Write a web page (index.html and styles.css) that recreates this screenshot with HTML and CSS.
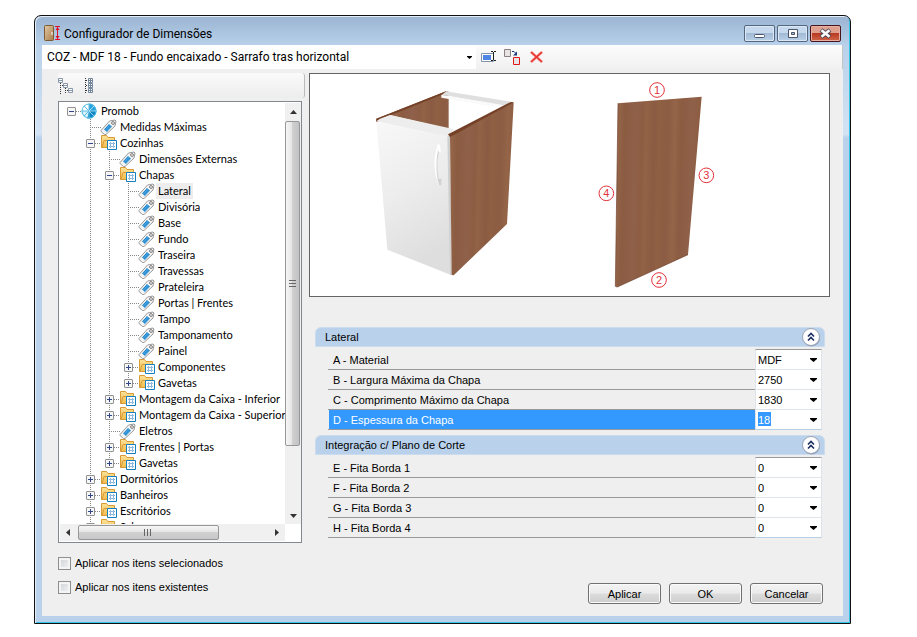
FILE: index.html
```
<!DOCTYPE html>
<html lang="pt-BR">
<head>
  <meta charset="UTF-8">
  <meta name="viewport" content="width=device-width, initial-scale=1">
  <title>Configurador de Dimensões</title>
  <link rel="stylesheet" href="styles.css">
</head>
<body>

  <!-- Shared icons -->
  <svg class="defs" width="0" height="0" aria-hidden="true">
    <defs>
      <linearGradient id="gold" x1="0" y1="0" x2="0" y2="1">
        <stop offset="0" stop-color="#fbe29a"/>
        <stop offset="1" stop-color="#f3bd4c"/>
      </linearGradient>
      <linearGradient id="door" x1="0" y1="0" x2="1" y2="1">
        <stop offset="0" stop-color="#e3cba6"/>
        <stop offset="1" stop-color="#a97b4a"/>
      </linearGradient>
      <linearGradient id="wood" gradientUnits="userSpaceOnUse" x1="0" y1="0" x2="170" y2="4" spreadMethod="repeat">
        <stop offset="0" stop-color="#90614a"/>
        <stop offset=".12" stop-color="#8d5d43"/>
        <stop offset=".2" stop-color="#936347"/>
        <stop offset=".34" stop-color="#8a5a42"/>
        <stop offset=".42" stop-color="#906044"/>
        <stop offset=".58" stop-color="#8c5c43"/>
        <stop offset=".7" stop-color="#946548"/>
        <stop offset=".82" stop-color="#8b5b42"/>
        <stop offset="1" stop-color="#90614a"/>
      </linearGradient>
      <linearGradient id="front" x1="0" y1="0" x2=".3" y2="1">
        <stop offset="0" stop-color="#f8f8f8"/>
        <stop offset=".5" stop-color="#ededed"/>
        <stop offset="1" stop-color="#dedede"/>
      </linearGradient>
    </defs>
    <symbol id="tag" viewBox="0 0 17 16">
      <path d="M1 11.500 9.500 2 15 1 16 2 15 7 6 15.500 4.500 15.500 1 12.500z" fill="#f4f4f4" stroke="#999"/>
      <path d="M4 10.500 9 5 12 7.500 7 13z" fill="#2389cf"/>
      <path d="M5.500 11 10 6M7 12 11 7.500" stroke="#74bdea" stroke-width=".6"/>
      <circle cx="13" cy="4" r="1.400" fill="#fff" stroke="#777"/>
    </symbol>
    <symbol id="folder" viewBox="0 0 17 16">
      <path d="M1.500 12.500V.5H6.500L8 2.500H14.500V12.500z" fill="url(#gold)" stroke="#d89b35"/>
      <path d="M2 13 4 5.500H15" fill="none" stroke="#d89b35"/>
      <path d="M7.500 5.500h9v9h-9z" fill="#fff" stroke="#1580c0"/>
      <path d="M9 8.500h6M9 11.500h6M10.500 7v6M13.500 7v6" stroke="#8fb8df"/>
    </symbol>
    <symbol id="globe" viewBox="0 0 17 16">
      <circle cx="8" cy="8" r="7.500" fill="#fff"/>
      <path d="M8 8V.5A7.500 7.500 0 0 1 15.500 8z" fill="#2aa2dc"/>
      <path d="M8 8H15.500A7.500 7.500 0 0 1 6 15.200z" fill="#1186c4"/>
      <path d="M8 8 6 15.200A7.500 7.500 0 0 1 .5 8z" fill="#d6f0fa"/>
      <circle cx="8" cy="8" r="7" fill="none" stroke="#49b8e2"/>
      <path d="M8 8V1M8 8 3 3M8 8H1M8 8 3 13M8 8V15M8 8 13 3" stroke="#58bce2"/>
      <path d="M8 8 13 3M8 8H15M8 8 13 13" stroke="#c8ebf8" stroke-width=".7"/>
    </symbol>
    <symbol id="caret" viewBox="0 0 7 4">
      <path d="M0 0h7v1L3.500 4 0 1z"/>
    </symbol>
    <symbol id="collapse" viewBox="0 0 20 20">
      <circle cx="10.500" cy="11" r="8.500" fill="#8c9cb4"/>
      <circle cx="10" cy="10" r="8.500" fill="#fff" stroke="#9aa2b4"/>
      <path d="M7 9.500 10 6.500 13 9.500M7 13.500 10 10.500 13 13.500" fill="none" stroke="#1c2d60" stroke-width="1.600"/>
    </symbol>
  </svg>

  <main class="window">
    <header class="titlebar">
      <svg class="app-icon" width="17" height="17" viewBox="0 0 17 17">
        <rect x=".5" y=".5" width="9" height="15" rx="1" fill="url(#door)" stroke="#7c5a35"/>
        <path d="M8 7v3" stroke="#fff"/>
        <path d="M11 1.500h5M11 14.500h5M13.500 2v12" stroke="#e0102a"/>
        <path d="M11.500 5 13.500 2 15.500 5zM11.500 11 13.500 14 15.500 11z" fill="#e0102a"/>
      </svg>
      <h1>Configurador de Dimensões</h1>
      <div class="window-buttons">
        <button class="win-btn" aria-label="Minimizar"><svg width="13" height="13" viewBox="0 0 13 13"><rect x="1.500" y="7.500" width="10" height="3" rx="1" fill="#fff" stroke="#4b556b"/></svg></button>
        <button class="win-btn" aria-label="Maximizar"><svg width="13" height="13" viewBox="0 0 13 13"><path d="M2.500 2.500h9v8h-9z" fill="#fff" stroke="#4b556b"/><path d="M5.500 5.500h3v2h-3z" fill="#a9bfd9" stroke="#4b556b"/></svg></button>
        <button class="win-btn close" aria-label="Fechar"><svg width="13" height="13" viewBox="0 0 13 13"><path d="M2 3 11 10M11 3 2 10" stroke="#4b4a5c" stroke-width="4.500"/><path d="M2.500 3.300 10.500 9.700M10.500 3.300 2.500 9.700" stroke="#fff" stroke-width="2.500"/></svg></button>
      </div>
    </header>

    <div class="client">
      <div class="toolbar">
        <div class="preset">
          <select aria-label="Configuração">
            <option>COZ - MDF 18 - Fundo encaixado - Sarrafo tras horizontal</option>
          </select>
          <svg class="caret" width="5" height="3"><use href="#caret"/></svg>
        </div>
        <button class="tool" aria-label="Renomear">
          <svg width="17" height="16" viewBox="0 0 17 16"><path d="M1.500 4.500h12v8h-12z" fill="#fff" stroke="#8294ad"/><path d="M3 6h8v5H3z" fill="#4f86e4"/><path d="M11 2.500h2M14 2.500h2M13.500 3v8M11 11.500h2M14 11.500h2" stroke="#222"/></svg>
        </button>
        <button class="tool" aria-label="Duplicar">
          <svg width="17" height="17" viewBox="0 0 17 17"><path d="M.5.500h6v7h-6z" fill="#e8e4e4" stroke="#8a8080"/><path d="M9.500 8.500h6v7h-6z" fill="#e8e4e4" stroke="#e01818"/><path d="M8 2.500h2l2 2" fill="none" stroke="#1b3878"/><path d="M9 6.500h4v-4z" fill="#1b3878"/></svg>
        </button>
        <button class="tool" aria-label="Excluir">
          <svg width="15" height="14" viewBox="0 0 15 14"><path d="M2 2 13 12M13 2 2 12" stroke="#f5a59c" stroke-width="3"/><path d="M2 2 13 12M13 2 2 12" stroke="#e83030" stroke-width="1.600"/></svg>
        </button>
      </div>

      <div class="content">
        <section class="sidebar">
          <div class="tree-tools">
            <button class="tool" aria-label="Recolher tudo">
              <svg width="16" height="16" viewBox="0 0 16 16"><path d="M2.500 5v11M7.500 10v6M4 7.500h2M9 12.500h2" stroke="#333" stroke-dasharray="1 1"/><g fill="#fff" stroke="#8796a8"><path d="M.5.500h4v4h-4zM5.500 5.500h4v4h-4zM10.500 10.500h4v4h-4z"/><path d="M1 2.500h3M6 7.500h3M11 12.500h3"/></g></svg>
            </button>
            <button class="tool" aria-label="Expandir tudo">
              <svg width="10" height="16" viewBox="0 0 10 16"><path d="M1.500 0v16M2 2.500h2M2 7.500h2M2 12.500h2" stroke="#333" stroke-dasharray="1 1"/><g fill="#fff" stroke="#74869a"><path d="M4.500.500h4v4h-4zM4.500 5.500h4v4h-4zM4.500 10.500h4v4h-4z"/><path d="M5 2.500h3M5 7.500h3M5 12.500h3M6.500 1v13"/></g></svg>
            </button>
          </div>

          <div class="tree-box">
            <div class="tree-view">
              <ul class="tree" role="tree">
                <li>
                  <div class="node"><button class="toggle" aria-label="Recolher"></button><svg><use href="#globe"/></svg><span>Promob</span></div>
                  <ul class="open-end">
                    <li><div class="node leaf"><svg><use href="#tag"/></svg><span>Medidas Máximas</span></div></li>
                    <li>
                      <div class="node"><button class="toggle" aria-label="Recolher"></button><svg><use href="#folder"/></svg><span>Cozinhas</span></div>
                      <ul>
                        <li><div class="node leaf"><svg><use href="#tag"/></svg><span>Dimensões Externas</span></div></li>
                        <li>
                          <div class="node"><button class="toggle" aria-label="Recolher"></button><svg><use href="#folder"/></svg><span>Chapas</span></div>
                          <ul>
                            <li><div class="node leaf current"><svg><use href="#tag"/></svg><span>Lateral</span></div></li>
                            <li><div class="node leaf"><svg><use href="#tag"/></svg><span>Divisória</span></div></li>
                            <li><div class="node leaf"><svg><use href="#tag"/></svg><span>Base</span></div></li>
                            <li><div class="node leaf"><svg><use href="#tag"/></svg><span>Fundo</span></div></li>
                            <li><div class="node leaf"><svg><use href="#tag"/></svg><span>Traseira</span></div></li>
                            <li><div class="node leaf"><svg><use href="#tag"/></svg><span>Travessas</span></div></li>
                            <li><div class="node leaf"><svg><use href="#tag"/></svg><span>Prateleira</span></div></li>
                            <li><div class="node leaf"><svg><use href="#tag"/></svg><span>Portas | Frentes</span></div></li>
                            <li><div class="node leaf"><svg><use href="#tag"/></svg><span>Tampo</span></div></li>
                            <li><div class="node leaf"><svg><use href="#tag"/></svg><span>Tamponamento</span></div></li>
                            <li><div class="node leaf"><svg><use href="#tag"/></svg><span>Painel</span></div></li>
                            <li><div class="node"><button class="toggle plus" aria-label="Expandir"></button><svg><use href="#folder"/></svg><span>Componentes</span></div></li>
                            <li><div class="node"><button class="toggle plus" aria-label="Expandir"></button><svg><use href="#folder"/></svg><span>Gavetas</span></div></li>
                          </ul>
                        </li>
                        <li><div class="node"><button class="toggle plus" aria-label="Expandir"></button><svg><use href="#folder"/></svg><span>Montagem da Caixa - Inferior</span></div></li>
                        <li><div class="node"><button class="toggle plus" aria-label="Expandir"></button><svg><use href="#folder"/></svg><span>Montagem da Caixa - Superior</span></div></li>
                        <li><div class="node leaf"><svg><use href="#tag"/></svg><span>Eletros</span></div></li>
                        <li><div class="node"><button class="toggle plus" aria-label="Expandir"></button><svg><use href="#folder"/></svg><span>Frentes | Portas</span></div></li>
                        <li><div class="node"><button class="toggle plus" aria-label="Expandir"></button><svg><use href="#folder"/></svg><span>Gavetas</span></div></li>
                      </ul>
                    </li>
                    <li><div class="node"><button class="toggle plus" aria-label="Expandir"></button><svg><use href="#folder"/></svg><span>Dormitórios</span></div></li>
                    <li><div class="node"><button class="toggle plus" aria-label="Expandir"></button><svg><use href="#folder"/></svg><span>Banheiros</span></div></li>
                    <li><div class="node"><button class="toggle plus" aria-label="Expandir"></button><svg><use href="#folder"/></svg><span>Escritórios</span></div></li>
                    <li><div class="node"><button class="toggle plus" aria-label="Expandir"></button><svg><use href="#folder"/></svg><span>Salas</span></div></li>
                  </ul>
                </li>
              </ul>
            </div>
            <div class="scroll vertical">
              <button aria-label="Rolar para cima"><svg width="7" height="4" viewBox="0 0 7 4"><path d="M0 4 3.500 0 7 4z"/></svg></button>
              <div class="track"><div class="thumb"></div></div>
              <button aria-label="Rolar para baixo"><svg width="7" height="4" viewBox="0 0 7 4"><path d="M0 0 3.500 4 7 0z"/></svg></button>
            </div>
            <div class="scroll horizontal">
              <button aria-label="Rolar para a esquerda"><svg width="4" height="7" viewBox="0 0 4 7"><path d="M4 0 0 3.500 4 7z"/></svg></button>
              <div class="track"><div class="thumb"></div></div>
              <button aria-label="Rolar para a direita"><svg width="4" height="7" viewBox="0 0 4 7"><path d="M0 0 4 3.500 0 7z"/></svg></button>
            </div>
          </div>

          <div class="options">
            <label><input type="checkbox">Aplicar nos itens selecionados</label>
            <label><input type="checkbox">Aplicar nos itens existentes</label>
          </div>
        </section>

        <section class="details">
          <div class="preview">
            <svg viewBox="0 0 1557 666" role="img" aria-label="Módulo e chapa lateral">
              <!-- Cabinet -->
              <g transform="translate(-30 -27)">
                <path d="M229 161 440 78 446 81V192L270 150 236 168 229 170z" fill="url(#wood)"/>
                <path d="M229 161 440 78 446 81 238 164V168L229 170z" fill="#744027"/>
                <path d="M440 78 446 80 638 111 614 123 426 89z" fill="#dfdfdf"/>
                <path d="M424 89 614 121 600 128 446 102 424 98z" fill="#fafafa"/>
                <path d="M229 169 240 161 270 150 463 193 446 209 446 217z" fill="#ededed"/>
                <path d="M229 170 446 216 453 630 262 554z" fill="url(#front)"/>
                <path d="M442 215 450 212 456 630 450 629z" fill="#cfcfcf"/>
                <path d="M445 210 638 111 641 113 621 477 461 631 455 630 450 213z" fill="url(#wood)"/>
                <path d="M444 208 632 111 641 112 450 216z" fill="#744027"/>
                <path d="M413 238Q420 236 421 244L422 263 417 260Q407 300 415 341L425 339 424 361 415 359Q392 300 413 238z" fill="#fff"/>
                <path d="M417 262Q408 300 416 341L425 340 424 361 417 360 413 345Q405 300 414 255z" fill="#d2d2d2"/>
              </g>
              <!-- Side board -->
              <g transform="translate(810 -27)">
                <path d="M114 115 365 95 324 569 112 666 106 664z" fill="url(#wood)"/>
                <path d="M114 115 106 664 112 666 324 569" fill="none" stroke="#70432e" stroke-width="2"/>
                <g class="marks">
                  <circle cx="231" cy="75" r="22"/><text x="231" y="87">1</text>
                  <circle cx="237" cy="645" r="22"/><text x="237" y="657">2</text>
                  <circle cx="379" cy="331" r="22"/><text x="379" y="343">3</text>
                  <circle cx="79" cy="385" r="22"/><text x="79" y="397">4</text>
                </g>
              </g>
            </svg>
          </div>

          <form class="properties">
            <section class="group">
              <h2>Lateral <button type="button" aria-label="Recolher Lateral"><svg width="20" height="20"><use href="#collapse"/></svg></button></h2>
              <div class="rows">
                <div class="row"><label for="material">A - Material</label><div class="field"><select id="material"><option>MDF</option></select><svg class="caret" width="7" height="4"><use href="#caret"/></svg></div></div>
                <div class="row"><label for="largura">B - Largura Máxima da Chapa</label><div class="field"><input id="largura" value="2750"><svg class="caret" width="7" height="4"><use href="#caret"/></svg></div></div>
                <div class="row"><label for="comprimento">C - Comprimento Máximo da Chapa</label><div class="field"><input id="comprimento" value="1830"><svg class="caret" width="7" height="4"><use href="#caret"/></svg></div></div>
                <div class="row selected"><label for="espessura">D - Espessura da Chapa</label><div class="field"><input id="espessura" value="18"><svg class="caret" width="7" height="4"><use href="#caret"/></svg></div></div>
              </div>
            </section>
            <section class="group">
              <h2>Integração c/ Plano de Corte <button type="button" aria-label="Recolher Integração"><svg width="20" height="20"><use href="#collapse"/></svg></button></h2>
              <div class="rows">
                <div class="row"><label for="fita1">E - Fita Borda 1</label><div class="field"><input id="fita1" value="0"><svg class="caret" width="7" height="4"><use href="#caret"/></svg></div></div>
                <div class="row"><label for="fita2">F - Fita Borda 2</label><div class="field"><input id="fita2" value="0"><svg class="caret" width="7" height="4"><use href="#caret"/></svg></div></div>
                <div class="row"><label for="fita3">G - Fita Borda 3</label><div class="field"><input id="fita3" value="0"><svg class="caret" width="7" height="4"><use href="#caret"/></svg></div></div>
                <div class="row"><label for="fita4">H - Fita Borda 4</label><div class="field"><input id="fita4" value="0"><svg class="caret" width="7" height="4"><use href="#caret"/></svg></div></div>
              </div>
            </section>
          </form>

          <div class="actions">
            <button>Aplicar</button>
            <button>OK</button>
            <button>Cancelar</button>
          </div>
        </section>
      </div>
    </div>
  </main>

</body>
</html>
```
FILE: styles.css
```
* {
  box-sizing: border-box;
}

body {
  margin: 0;
  padding: 15px 66px 13px 34px;
  background: #fff;
  color: #000;
  font: 11px/16px "Liberation Sans", Arial, sans-serif;
}

button, input, select {
  font: inherit;
  color: inherit;
  margin: 0;
  padding: 0;
}

button {
  display: flex;
  align-items: center;
  justify-content: center;
  border: none;
  background: none;
}

.defs {
  position: absolute;
}

/* Window frame */
.window {
  display: flex;
  flex-direction: column;
  height: calc(100vh - 28px);
  min-height: 560px;
  padding: 0 6px 6px;
  border: 1px solid #111;
  border-radius: 7px 7px 0 0;
  background: linear-gradient(#9ab4d2, #b9d1ea 30px, #d3e3f4 118px, #b9d1ea 122px);
  box-shadow: inset 1px 1px #e4eef8, inset -1px -1px #35c5e8;
}

.titlebar {
  display: flex;
  align-items: center;
  gap: 3px;
  height: 29px;
  padding: 6px 3px 0 3px;
}

.titlebar h1 {
  flex: 1;
  margin: 0;
  font: 12px/16px Roboto, sans-serif;
}

.window-buttons {
  display: flex;
  gap: 2px;
}

.win-btn {
  width: 31px;
  height: 17px;
  border: 1px solid #54657f;
  border-radius: 2px;
  background: linear-gradient(#c6d8ec 45%, #a3bad5 50%, #b9d0e8);
  box-shadow: inset 0 0 0 1px #dbe8f5;
}

.win-btn.close {
  border-color: #47141c;
  background: linear-gradient(#dfa090 45%, #b83a22 50%, #d0674a);
  box-shadow: inset 0 0 0 1px #e7b0a4;
}

.client {
  flex: 1;
  display: flex;
  flex-direction: column;
  min-height: 0;
  margin: 0 1px 1px;
  background: #efefef;
}

/* Toolbar */
.toolbar {
  display: flex;
  align-items: center;
  height: 24px;
  background: linear-gradient(#fcfcfc, #f0f0f0);
  border-right: 1px solid #c4c4c4;
}

.preset {
  display: flex;
  align-items: center;
  width: 434px;
  height: 24px;
  padding-right: 4px;
  background: #fff;
}

.preset select {
  flex: 1;
  min-width: 0;
  height: 24px;
  padding: 0 5px;
  border: none;
  background: none;
  appearance: none;
  font: 12px/16px Roboto, sans-serif;
}

.tool {
  width: 24px;
  height: 22px;
}

/* Tree panel */
.content {
  flex: 1;
  display: flex;
  gap: 4px;
  min-height: 0;
  padding: 4px 13px 12px 16px;
}

.sidebar {
  display: flex;
  flex-direction: column;
  width: 247px;
}

.tree-tools {
  display: flex;
  align-items: center;
  height: 25px;
  border-right: 1px solid #bbb;
  border-radius: 3px;
  background: linear-gradient(#fafafa, #ededed);
}

.tree-tools .tool:first-child {
  width: 16px;
  margin-right: 3px;
}

.tree-box {
  flex: 1;
  display: grid;
  grid-template-columns: 1fr 16px;
  grid-template-rows: 1fr 17px;
  min-height: 0;
  margin: 3px 3px 0 0;
  padding: 1px 0 1px 1px;
  border: 1px solid #828790;
  background: #fff;
}

.tree-view {
  min-height: 0;
  overflow: hidden;
  padding-left: 7px;
}

.tree,
.tree ul {
  margin: 0;
  padding: 0;
  list-style: none;
  font-family: Lato, sans-serif;
  white-space: nowrap;
}

.tree ul {
  margin-left: 19px;
  background: repeating-linear-gradient(#888 0 1px, transparent 1px 2px) 4px 0 / 1px calc(100% - 8px) no-repeat;
}

.tree ul.open-end {
  background-size: 1px 100%;
}

.node {
  display: flex;
  align-items: center;
  height: 16px;
  background: repeating-linear-gradient(90deg, #888 0 1px, transparent 1px 2px) 9px 8px / 6px 1px no-repeat;
}

.node.leaf {
  padding-left: 14px;
  background-position: 4px 8px;
  background-size: 11px 1px;
}

.node svg {
  flex: none;
  width: 17px;
  height: 16px;
}

.node span {
  margin-left: 1px;
  padding: 0 2px;
}

.node.current span {
  background: #ededed;
}

.toggle {
  flex: none;
  width: 9px;
  height: 9px;
  margin-right: 5px;
  border: 1px solid #919191;
  border-radius: 1px;
  background:
    linear-gradient(#33458c, #33458c) center / 5px 1px no-repeat,
    #f6f6f6;
}

.toggle.plus {
  background:
    linear-gradient(#33458c, #33458c) center / 5px 1px no-repeat,
    linear-gradient(#33458c, #33458c) center / 1px 5px no-repeat,
    #f6f6f6;
}

/* Scroll bars */
.scroll {
  display: flex;
  background: #f0f0f0;
}

.scroll button {
  flex: none;
  width: 16px;
  height: 17px;
}

.scroll svg {
  fill: #333;
}

.track {
  flex: 1;
}

.thumb {
  border: 1px solid #979797;
  border-radius: 2px;
}

.vertical {
  flex-direction: column;
}

.vertical .thumb {
  width: 15px;
  height: 84%;
  margin: 1px 0;
  background:
    repeating-linear-gradient(#666 0 1px, transparent 1px 3px) center / 7px 8px no-repeat,
    linear-gradient(90deg, #f6f6f6, #e6e6e6 45%, #d0d0d0 50%, #c2c2c6);
}

.horizontal .thumb {
  width: 73%;
  height: 15px;
  margin: 1px 2px;
  background:
    repeating-linear-gradient(90deg, #666 0 1px, transparent 1px 3px) center / 8px 7px no-repeat,
    linear-gradient(#f6f6f6, #e6e6e6 45%, #d0d0d0 50%, #c8c8cc);
}

/* Options */
.options {
  display: flex;
  flex-direction: column;
  gap: 8px;
  padding: 12px 0 9px;
}

.options label {
  display: flex;
  align-items: center;
  gap: 4px;
}

.options input {
  width: 13px;
  height: 13px;
  appearance: none;
  border: 1px solid #8e8f8f;
  background: linear-gradient(135deg, #cbcfd5, #f6f6f6);
  box-shadow: inset 0 0 0 2px #f4f4f4;
}

/* Preview and properties */
.details {
  flex: 1;
  display: flex;
  flex-direction: column;
  min-width: 0;
}

.preview {
  height: 224px;
  border: 1px solid #646464;
  background: #fff;
}

.preview svg {
  display: block;
  width: 100%;
  height: 100%;
}

.marks circle {
  fill: none;
  stroke: #e2333c;
  stroke-width: 3px;
}

.marks text {
  fill: #e2333c;
  font-size: 33px;
  text-anchor: middle;
}

.properties {
  display: flex;
  flex-direction: column;
  gap: 5px;
  margin: 30px 5px 0 6px;
}

.group h2 {
  display: flex;
  align-items: center;
  justify-content: space-between;
  height: 20px;
  margin: 0 0 2px;
  padding: 0 3px 0 9px;
  border: 1px solid #cbdcef;
  border-radius: 6px 6px 0 0;
  background: #b9d1ea;
  font-size: 11px;
  font-weight: normal;
}

.rows {
  margin: 0 3px 0 13px;
}

.row {
  display: flex;
  align-items: flex-end;
  height: 20px;
  border-bottom: 1px solid #999;
}

.row label {
  flex: 1;
  height: 19px;
  padding-left: 5px;
  line-height: 20px;
}

.row.selected label {
  margin-left: 1px;
  padding-left: 4px;
  background: #3399ff;
  color: #fff;
}

/* The field covers the rule under the row with its own lighter edge */
.field {
  display: flex;
  align-items: center;
  width: 67px;
  height: 20px;
  margin-bottom: -1px;
  padding-right: 4px;
  border: 1px solid #dfe3ea;
  border-top: none;
  background: #fff;
}

.row:first-child {
  height: 21px;
}

.row:first-child .field {
  height: 21px;
  border-top: 1px solid #999;
}

.row:last-child .field {
  border-bottom-color: #b5cfe7;
}

.field input,
.field select {
  flex: 1;
  width: 0;
  height: 16px;
  padding: 0 2px;
  border: none;
  outline: none;
  background: none;
  appearance: none;
}

.row.selected input {
  padding: 0;
  margin-left: 2px;
  color: #fff;
  background: linear-gradient(#3399ff, #3399ff) 0 0 / 13px 14px no-repeat;
}

/* Bottom buttons */
.actions {
  display: flex;
  justify-content: flex-end;
  gap: 8px;
  margin: auto 7px 0 0;
}

.actions button {
  width: 73px;
  height: 21px;
  border: 1px solid #707070;
  border-radius: 3px;
  background: linear-gradient(#f3f3f3, #ebebeb 48%, #dcdcdc 52%, #cdcdcd);
  box-shadow: inset 0 0 0 1px #fafafa;
}
```
